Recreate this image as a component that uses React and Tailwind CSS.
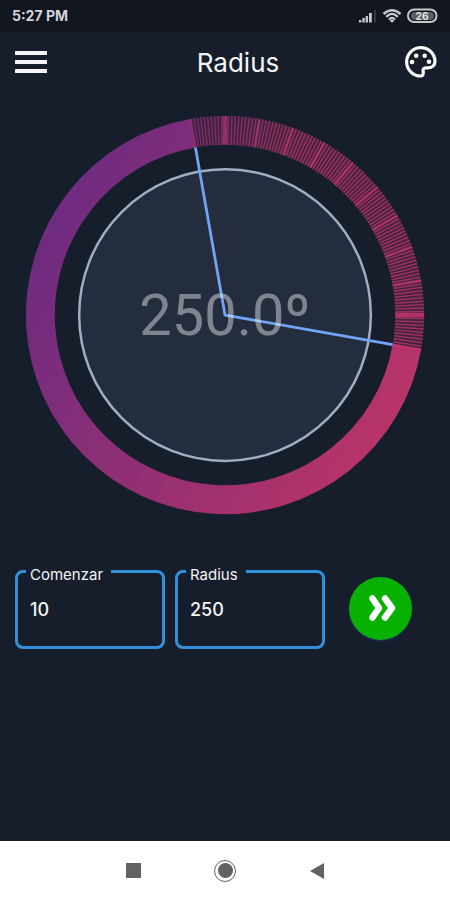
const CX = 225;
const CY = 215;
const OUTER = 200;
const INNER = 171;
const START = 10;
const SWEEP = 250;

function point(radius, degrees) {
  const a = (degrees * Math.PI) / 180;
  return [CX + radius * Math.cos(a), CY + radius * Math.sin(a)];
}

function bandPath(from, to) {
  const large = to - from > 180 ? 1 : 0;
  const [ax, ay] = point(OUTER, from);
  const [bx, by] = point(OUTER, to);
  const [cx, cy] = point(INNER, to);
  const [dx, dy] = point(INNER, from);
  return `M${ax} ${ay}A${OUTER} ${OUTER} 0 ${large} 1 ${bx} ${by}L${cx} ${cy}A${INNER} ${INNER} 0 ${large} 0 ${dx} ${dy}Z`;
}

function Ticks() {
  const ticks = [];
  for (let d = START + SWEEP; d <= START + 360; d += 1) {
    const [x1, y1] = point(INNER, d);
    const [x2, y2] = point(OUTER, d);
    const major = d % 10 === 0;
    const width = d % 90 === 0 ? 4.5 : major ? 2.4 : 1.5;
    ticks.push(
      <path key={d} d={`M${x1} ${y1}L${x2} ${y2}`} strokeWidth={width} opacity={major ? 0.85 : 0.7} />
    );
  }
  return <g stroke="url(#scale)">{ticks}</g>;
}

function Dial() {
  const [sx, sy] = point(INNER, START);
  const [ex, ey] = point(INNER, START + SWEEP);
  return (
    <svg viewBox="0 0 450 430" className="block w-full max-w-md" role="img" aria-label="250.0º">
      <defs>
        <linearGradient id="ring" gradientUnits="userSpaceOnUse" x1="30" y1="130" x2="400" y2="320">
          <stop offset="0" stopColor="#6c2b80" />
          <stop offset="1" stopColor="#b93467" />
        </linearGradient>
        <linearGradient id="scale" gradientUnits="userSpaceOnUse" x1="190" y1="20" x2="290" y2="60">
          <stop offset="0" stopColor="#8f2f78" />
          <stop offset="1" stopColor="#c5356f" />
        </linearGradient>
      </defs>
      <path d={bandPath(START, START + SWEEP)} fill="url(#ring)" />
      <path d={bandPath(START + SWEEP, START + 360)} fill="url(#scale)" opacity="0.25" />
      <Ticks />
      <circle cx={CX} cy={CY} r="146.5" fill="#242d3e" stroke="#a0aec0" strokeWidth="2.5" />
      <path d={`M${sx} ${sy}L${CX} ${CY}L${ex} ${ey}`} fill="none" stroke="#70a5f5" strokeWidth="2.8" />
      <text x={CX} y="235" textAnchor="middle" fill="#ffffff" fillOpacity="0.42" className="font-['Roboto',sans-serif] text-[58px]">
        250.0º
      </text>
    </svg>
  );
}

function Field({ id, label, value }) {
  return (
    <fieldset className="h-[90px] min-w-0 flex-1 rounded-lg border-[3px] border-[#3290db] px-2">
      <legend className="px-1 pt-2 text-[15px] leading-4">
        <label htmlFor={id} className="pr-1">{label}</label>
      </legend>
      <input
        id={id}
        type="text"
        inputMode="numeric"
        defaultValue={value}
        className="h-13 w-full bg-transparent px-1 text-lg font-medium text-gray-100 outline-none"
      />
    </fieldset>
  );
}

function StatusBar() {
  return (
    <div className="flex h-8 items-center justify-between bg-[#11161f] px-3 text-sm font-bold text-gray-300">
      <span>5:27 PM</span>
      <svg width="80" height="18" viewBox="0 0 80 18" aria-hidden="true">
        <g fill="#c5c7ca">
          <rect x="1" y="13" width="2.4" height="2.500" />
          <rect x="4.300" y="11" width="2.400" height="4.500" />
          <rect x="7.600" y="9" width="2.400" height="6.500" />
          <rect x="11" y="6" width="2.800" height="9.500" />
          <rect x="16.500" y="3" width="1" height="12.500" opacity="0.4" />
        </g>
        <g fill="none" stroke="#c5c7ca" strokeWidth="2.400">
          <path d="M25.500 7Q34 -0.500 42.500 7M28.200 9.800Q34 4 39.800 9.800M31 12.500Q34 9.500 37 12.500" />
        </g>
        <path d="M31.500 13L34 16L36.500 13Z" fill="#c5c7ca" />
        <rect x="50" y="2.500" width="28.500" height="12.500" rx="6.200" fill="none" stroke="#c5c7ca" strokeWidth="2" />
        <path d="M57 5H72A4 4 0 0 1 72 13H57A4 4 0 0 1 57 5Z" fill="#5a5e65" />
        <text x="64" y="12.500" textAnchor="middle" fill="#e2e3e5" className="text-[10px] font-bold">26</text>
      </svg>
    </div>
  );
}

function PaletteIcon() {
  return (
    <svg width="42" height="42" viewBox="0 0 42 42" fill="none" aria-hidden="true">
      <path
        d="M21 35A14.200 14.200 0 1 1 35 20C35.200 24.600 32 26.800 28 26.800H26C23.200 26.800 22.800 28.400 23.200 30.500C23.600 33 23 35 21 35Z"
        stroke="#fafafa"
        strokeWidth="3.200"
        strokeLinejoin="round"
      />
      <g fill="#fafafa">
        <circle cx="12" cy="21" r="2.300" />
        <circle cx="16.200" cy="14.800" r="2.300" />
        <circle cx="24.700" cy="14.800" r="2.300" />
        <circle cx="29" cy="20.800" r="2.300" />
      </g>
    </svg>
  );
}

export default function App() {
  return (
    <div className="flex min-h-screen flex-col bg-[#171e2b] font-['Inter',sans-serif] text-gray-100">
      <StatusBar />
      <header className="flex h-15 items-center justify-between pr-2 pl-3">
        <button type="button" aria-label="Menu" className="flex h-10 w-16 items-center">
          <svg width="38" height="24" viewBox="0 0 38 24" fill="#f4f5f7" aria-hidden="true">
            <rect x="3" y="1" width="32" height="4" rx="0.500" />
            <rect x="3" y="10" width="32" height="4" rx="0.500" />
            <rect x="3" y="19" width="32" height="4" rx="0.500" />
          </svg>
        </button>
        <h1 className="text-[26px]">Radius</h1>
        <button type="button" aria-label="Colores" className="flex items-center">
          <PaletteIcon />
        </button>
      </header>
      <main className="flex flex-1 flex-col items-center pt-[9px]">
        <Dial />
        <form className="mt-[30px] flex w-full items-center pr-[38px] pl-[15px]" onSubmit={(e) => e.preventDefault()}>
          <div className="flex min-w-0 flex-1 gap-[10px]">
            <Field id="comenzar" label="Comenzar" value="10" />
            <Field id="radius" label="Radius" value="250" />
          </div>
          <button
            type="submit"
            aria-label="Continuar"
            className="mt-2 ml-6 flex size-[63px] items-center justify-center rounded-full bg-[#08b000] shadow-sm shadow-blue-900/60"
          >
            <svg width="30" height="30" viewBox="0 0 30 30" fill="none" stroke="#fff" strokeWidth="6.500" strokeLinecap="round" strokeLinejoin="round" aria-hidden="true">
              <path d="M6.500 5.500L13 15L6.500 24.500M19 5.500L26 15L19 24.500" />
            </svg>
          </button>
        </form>
      </main>
      <nav className="flex h-[59px] items-center justify-center gap-[68px] bg-white text-[#626262]">
        <button type="button" aria-label="Recientes" className="flex size-6 items-center justify-center">
          <span className="size-[15px] bg-current" />
        </button>
        <button type="button" aria-label="Inicio" className="flex size-6 items-center justify-center">
          <span className="flex size-[22px] items-center justify-center rounded-full border border-current">
            <span className="size-[15px] rounded-full bg-current" />
          </span>
        </button>
        <button type="button" aria-label="Atrás" className="flex size-6 items-center justify-center">
          <svg width="14" height="16" viewBox="0 0 14 16" fill="currentColor" aria-hidden="true">
            <path d="M14 0V16L0 8Z" />
          </svg>
        </button>
      </nav>
    </div>
  );
}
